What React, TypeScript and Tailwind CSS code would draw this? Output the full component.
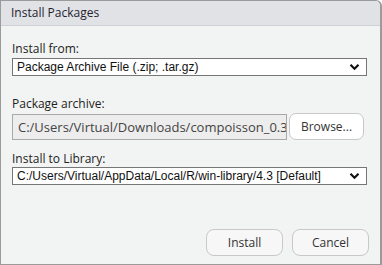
const Chevron = () => (
  <svg width="11" height="8" viewBox="0 0 11 8" className="shrink-0">
    <path d="M1.5 1.8 L5.5 5.8 L9.5 1.8" fill="none" stroke="#111" strokeWidth="2.2" />
  </svg>
);

const SelectBox = ({ value }: { value: string }) => (
  <div className="flex h-[18px] items-center justify-between border border-[#767676] bg-white pl-[4px] pr-[6px] font-['Liberation_Sans',Arial,sans-serif] text-[12px] leading-none text-[#111]">
    <span className="whitespace-nowrap">{value}</span>
    <Chevron />
  </div>
);

export default function App() {
  return (
    <div className="h-[265px] w-[382px] font-['Open_Sans','Noto_Sans',sans-serif] text-[#222]">
      <div className="flex h-full flex-col rounded-tr-[6px] border border-r-2 border-[#9b9b9b] bg-[#f2f4f3]">
        <div className="flex h-[25px] items-center rounded-tr-[5px] border-b border-[#cfd0d6] bg-[#e1e2e6] pl-[10px] text-[12px] text-[#1f1f2f]">
          Install Packages
        </div>
        <div className="flex flex-1 flex-col px-[11px]">
          <div className="mt-[15px] text-[12px] leading-[16px]">Install from:</div>
          <div className="mt-[1px] w-[355px]">
            <SelectBox value="Package Archive File (.zip; .tar.gz)" />
          </div>

          <div className="mt-[20px] text-[12px] leading-[16px]">Package archive:</div>
          <div className="mt-[1px] flex items-center gap-[2px]">
            <div className="h-[26px] w-[275px] overflow-hidden border border-[#a9a9a9] bg-[#ededed] pl-[5px]">
              <span className="block whitespace-nowrap text-[13px] leading-[24px] text-[#444]">
                C:/Users/Virtual/Downloads/compoisson_0.3.tar.gz
              </span>
            </div>
            <div className="flex h-[27px] w-[75px] items-center justify-center rounded-[7px] border border-[#c8c8c8] bg-white text-[12px] text-[#333]">
              Browse...
            </div>
          </div>

          <div className="mt-[11px] text-[12px] leading-[16px]">Install to Library:</div>
          <div className="w-[355px]">
            <SelectBox value="C:/Users/Virtual/AppData/Local/R/win-library/4.3 [Default]" />
          </div>

          <div className="mt-auto mb-[8px] flex justify-end gap-[9px]">
            <div className="flex h-[27px] w-[77px] items-center justify-center rounded-[8px] border border-[#c8c8c8] bg-[#f7f7f7] text-[12px] text-[#333]">
              Install
            </div>
            <div className="flex h-[27px] w-[77px] items-center justify-center rounded-[8px] border border-[#c8c8c8] bg-[#f7f7f7] text-[12px] text-[#333]">
              Cancel
            </div>
          </div>
        </div>
      </div>
    </div>
  );
}
